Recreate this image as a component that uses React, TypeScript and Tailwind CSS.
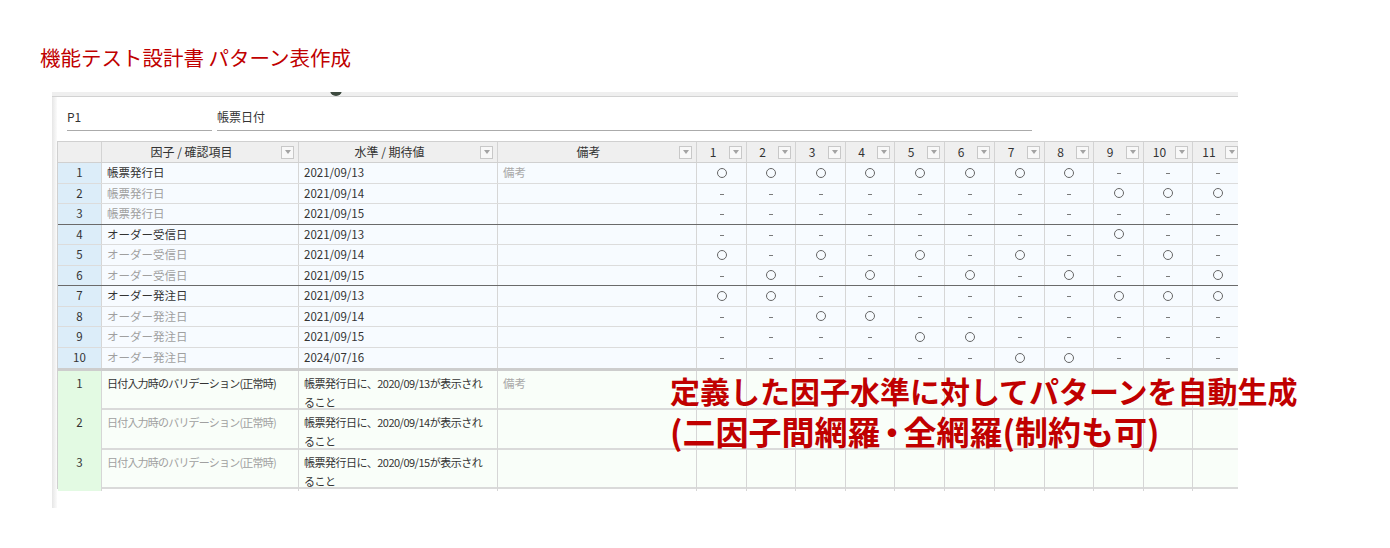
import React from 'react';

const gridCols =
  'grid grid-cols-[44px_197px_199px_199px_50px_49px_50px_49px_50px_50px_50px_49px_50px_49px_50px]';

const numCols = Array.from({ length: 11 }, (_, i) => i + 1);

type Row = {
  n: number;
  factor: string;
  level: string;
  main?: boolean;
  note?: string;
  pattern: string;
  sep?: 'group' | 'end';
};

const rows: Row[] = [
  { n: 1, factor: '帳票発行日', level: '2021/09/13', main: true, note: '備考', pattern: '11111111000' },
  { n: 2, factor: '帳票発行日', level: '2021/09/14', pattern: '00000000111' },
  { n: 3, factor: '帳票発行日', level: '2021/09/15', pattern: '00000000000', sep: 'group' },
  { n: 4, factor: 'オーダー受信日', level: '2021/09/13', main: true, pattern: '00000000100' },
  { n: 5, factor: 'オーダー受信日', level: '2021/09/14', pattern: '10101010010' },
  { n: 6, factor: 'オーダー受信日', level: '2021/09/15', pattern: '01010101001', sep: 'group' },
  { n: 7, factor: 'オーダー発注日', level: '2021/09/13', main: true, pattern: '11000000111' },
  { n: 8, factor: 'オーダー発注日', level: '2021/09/14', pattern: '00110000000' },
  { n: 9, factor: 'オーダー発注日', level: '2021/09/15', pattern: '00001100000' },
  { n: 10, factor: 'オーダー発注日', level: '2024/07/16', pattern: '00000011000', sep: 'end' },
];

const checks = [
  { n: 1, item: '日付入力時のバリデーション(正常時)', expect: '帳票発行日に、2020/09/13が表示され', main: true, note: '備考' },
  { n: 2, item: '日付入力時のバリデーション(正常時)', expect: '帳票発行日に、2020/09/14が表示され' },
  { n: 3, item: '日付入力時のバリデーション(正常時)', expect: '帳票発行日に、2020/09/15が表示され' },
];

const FilterButton = () => (
  <span className="mr-[4px] flex h-[13px] w-[13px] shrink-0 items-center justify-center border border-[#c8c8c8] bg-[#f8f8f8]">
    <svg width="6" height="4" viewBox="0 0 6 4">
      <polygon points="0,0 6,0 3,4" fill="#a3a3a3" />
    </svg>
  </span>
);

const HeaderCell = ({ label }: { label?: string }) => (
  <div className="flex h-full items-center border-r border-[#d3d3d3]">
    <span className="flex-1 text-center">{label}</span>
    {label !== undefined && <FilterButton />}
  </div>
);

const Mark = ({ on }: { on: boolean }) =>
  on ? (
    <span className="block h-[10px] w-[10px] rounded-full border-[1.5px] border-[#666]" />
  ) : (
    <span className="mt-[2px] block h-px w-[4px] bg-[#7a7a7a]" />
  );

export default function App() {
  return (
    <div className="relative h-[548px] w-[1390px] overflow-hidden bg-white font-['Noto_Sans_CJK_JP',sans-serif] text-[#333]">
      <h1 className="pl-[40px] pt-[43px] text-[20.5px] leading-[28px] font-normal text-[#c00000]">
        機能テスト設計書 パターン表作成
      </h1>

      {/* captured screen */}
      <div className="relative ml-[52px] mt-[21px] w-[1186px] overflow-hidden bg-white">
        <div className="h-[5px] border-b border-[#d2d2d2] bg-[#efefef]" />
        <span className="absolute left-[278px] top-[-2px] h-[6px] w-[12px] rounded-b-full bg-[#3d4a3f]" />

        <div className="flex">
          <div className="w-[5px] shrink-0 bg-gradient-to-r from-[#e6e6e6] to-[#fbfbfb]" />
          <div className="flex-1 pb-[19px]">
            <div className="flex gap-[5px] pl-[10px] pt-[11px] text-[12px]">
              <div className="h-[23px] w-[145px] border-b border-[#ababab] leading-[18px]">P1</div>
              <div className="h-[23px] w-[815px] border-b border-[#ababab] leading-[18px]">帳票日付</div>
            </div>

            <div className="mt-[10px] w-[1184px] border-l border-[#d0d0d0] text-[11.5px]">
              {/* header */}
              <div className={`${gridCols} h-[22px] border-y border-[#d0d0d0] bg-[#efefef] text-[12px]`}>
                <div className="border-r border-[#d3d3d3]" />
                <HeaderCell label="因子 / 確認項目" />
                <HeaderCell label="水準 / 期待値" />
                <HeaderCell label="備考" />
                {numCols.map((c) => (
                  <HeaderCell key={c} label={String(c)} />
                ))}
              </div>

              {/* factor / level rows */}
              {rows.map((r) => (
                <div
                  key={r.n}
                  className={`${gridCols} bg-[#f7fbff] ${
                    r.sep === 'group'
                      ? 'h-[20.5px] border-b-[1.5px] border-[#6a6a6a]'
                      : r.sep === 'end'
                        ? 'h-[23px] border-b-[3px] border-[#cdcdcd]'
                        : 'h-[20.5px] border-b border-[#dcdcdc]'
                  }`}
                >
                  <div className="flex items-center justify-center border-r border-[#d6d6d6] bg-[#dcedf9]">{r.n}</div>
                  <div className={`flex items-center border-r border-[#d6d6d6] pl-[5px] ${r.main ? 'text-[#333]' : 'text-[#a0a0a0]'}`}>
                    {r.factor}
                  </div>
                  <div className="flex items-center border-r border-[#d6d6d6] pl-[5px]">{r.level}</div>
                  <div className="flex items-center border-r border-[#d6d6d6] pl-[5px] text-[#a8a8a8]">{r.note}</div>
                  {r.pattern.split('').map((p, i) => (
                    <div key={i} className="flex items-center justify-center border-r border-[#d6d6d6]">
                      <Mark on={p === '1'} />
                    </div>
                  ))}
                </div>
              ))}

              {/* check item rows */}
              {checks.map((c) => (
                <div key={c.n} className={`${gridCols} h-[39.5px] border-b-2 border-[#dadada] bg-[#f9fef9] leading-[19px]`}>
                  <div className="border-r border-[#d6d6d6] bg-[#e3fae3] pt-[3px] text-center">{c.n}</div>
                  <div
                    className={`border-r border-[#d6d6d6] pl-[5px] pt-[3px] text-[11px] tracking-[-0.8px] whitespace-nowrap ${
                      c.main ? 'text-[#333]' : 'text-[#a0a0a0]'
                    }`}
                  >
                    {c.item}
                  </div>
                  <div className="border-r border-[#d6d6d6] pl-[5px] pt-[3px] text-[11px] tracking-[-0.5px] whitespace-nowrap">
                    {c.expect}
                    <br />
                    ること
                  </div>
                  <div className="border-r border-[#d6d6d6] pl-[5px] pt-[3px] text-[#a8a8a8]">{c.note}</div>
                  {numCols.map((n) => (
                    <div key={n} className="border-r border-[#d6d6d6]" />
                  ))}
                </div>
              ))}
            </div>
          </div>
        </div>
      </div>

      {/* callout over the table */}
      <div className="absolute left-[670px] top-[370px] whitespace-nowrap font-bold text-[#c00000]">
        <div className="text-[30px] leading-[40px]">定義した因子水準に対してパターンを自動生成</div>
        <div className="text-[33px] leading-[42px]">
          (二因子間網羅<span className="mx-[-5px]">・</span>全網羅(制約も可)
        </div>
      </div>
    </div>
  );
}
